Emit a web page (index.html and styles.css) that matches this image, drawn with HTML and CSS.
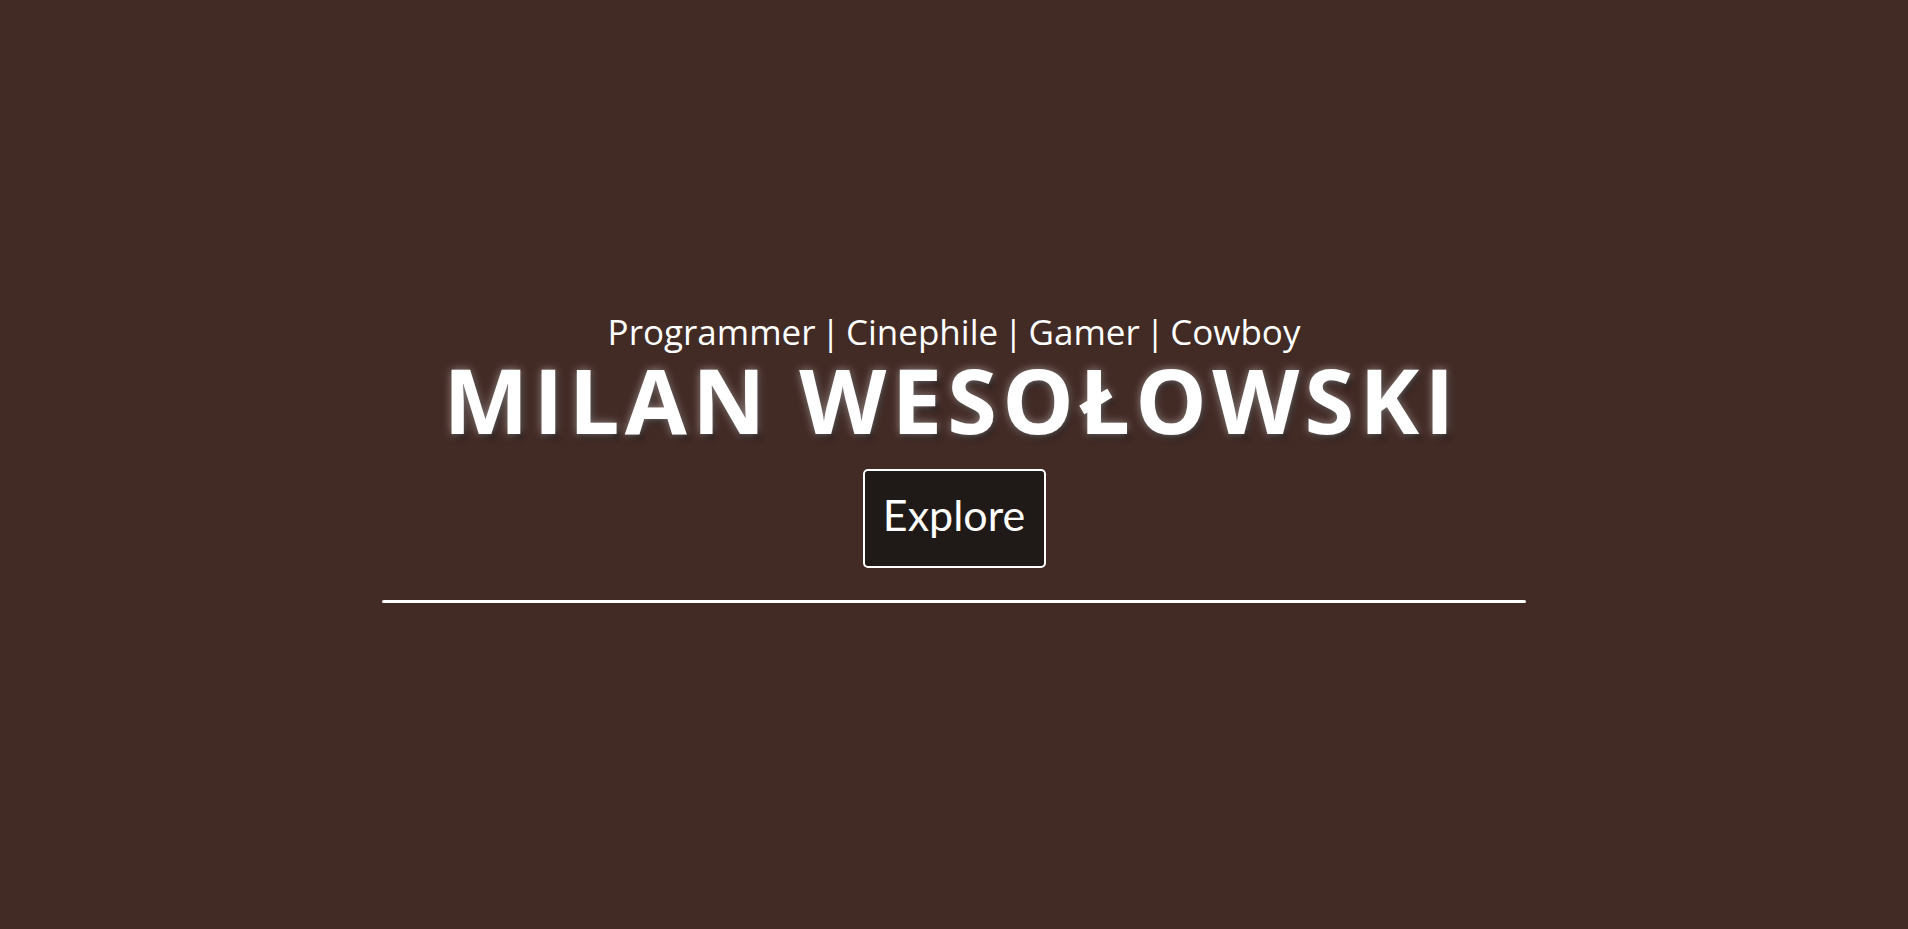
FILE: index.html
```html
<!DOCTYPE html>
<html lang="pl">
<head>
<meta charset="utf-8">
<title>Milan Wesołowski</title>
<link rel="stylesheet" href="styles.css">
</head>
<body>
<main class="hero">
  <p class="tagline">Programmer | Cinephile | Gamer | Cowboy</p>
  <h1 class="name">MILAN WESOŁOWSKI</h1>
  <a class="explore" href="#">Explore</a>
  <hr class="divider">
</main>
</body>
</html>
```
FILE: styles.css
```css
html, body {
  margin: 0;
  padding: 0;
}
body {
  background: #422a25;
  height: 100vh;
  overflow: hidden;
  color: #fff;
}
.hero {
  display: flex;
  flex-direction: column;
  align-items: center;
  padding-top: 310px;
}
.tagline {
  margin: 0;
  font-family: "Open Sans", sans-serif;
  font-size: 35px;
  line-height: 44px;
  word-spacing: -3.5px;
  color: #fff;
}
.name {
  margin: 0;
  padding-right: 5px;
  font-family: "Open Sans", sans-serif;
  font-weight: 700;
  font-size: 90px;
  line-height: 90px;
  letter-spacing: 5.3px;
  color: #fff;
  text-shadow: 0 0 10px rgba(255, 255, 255, 0.45), 3px 5px 5px rgba(0, 0, 0, 0.5);
}
.explore {
  margin-top: 25px;
  box-sizing: border-box;
  width: 183px;
  height: 99px;
  padding-bottom: 8px;
  display: flex;
  align-items: center;
  justify-content: center;
  background: #1f1917;
  border: 2px solid #fff;
  border-radius: 5px;
  font-family: "Lato", "Open Sans", sans-serif;
  font-size: 43px;
  color: #fff;
  text-decoration: none;
}
.divider {
  margin: 32px 0 0;
  width: 60%;
  height: 3px;
  border: 0;
  border-radius: 2px;
  background: #fff;
}
```
